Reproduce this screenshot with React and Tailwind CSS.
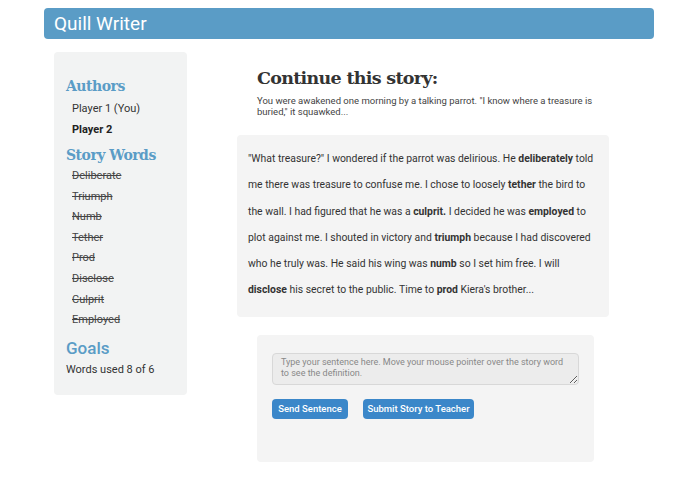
import React from 'react';

const slab = { fontFamily: '"DejaVu Serif", "Liberation Serif", serif' };

const storyWords = ['Deliberate', 'Triumph', 'Numb', 'Tether', 'Prod', 'Disclose', 'Culprit', 'Employed'];

const Sidebar = () => (
    <div className="mt-[13px] ml-[10px] w-[133px] h-[343px] bg-[#f2f3f3] rounded-sm pl-[12px] pt-[24px]">
        {/* Authors */}
        <h2 className="text-[14px] font-bold text-[#5a9cc6] leading-[20px] tracking-[-0.5px]" style={slab}>Authors</h2>
        <div className="pl-[6px] mt-[2px] text-[11px] text-[#333]">
            <div className="h-[21px] leading-[21px]">Player 1 (You)</div>
            <div className="h-[21px] leading-[21px] font-bold text-[#222]">Player 2</div>
        </div>

        {/* Story words, crossed out once used */}
        <h2 className="mt-[5px] text-[14px] font-bold text-[#5a9cc6] leading-[20px] tracking-[-0.5px]" style={slab}>Story Words</h2>
        <ul className="pl-[6px] mt-[1px] text-[11px] text-[#444]">
            {storyWords.map(w => (
                <li key={w} className="h-[20.6px] leading-[20.6px] line-through">{w}</li>
            ))}
        </ul>

        {/* Goals */}
        <h2 className="mt-[6px] text-[17px] font-medium text-[#5a9cc6] leading-[22px]">Goals</h2>
        <div className="mt-[1px] text-[11px] text-[#333] leading-[20px]">Words used 8 of 6</div>
    </div>
);

const Story = () => (
    <div className="w-[372px]">
        <div className="pl-[20px] pt-[26px]">
            <h1 className="text-[17.5px] font-bold text-[#333] leading-[26px] tracking-[-0.7px]" style={slab}>Continue this story:</h1>
            <p className="mt-[4px] text-[9.5px] leading-[11px] text-[#444] w-[345px]">
                You were awakened one morning by a talking parrot. "I know where a treasure is buried," it squawked...
            </p>
        </div>

        <div className="mt-[18px] bg-[#f4f4f4] rounded-sm px-[11px] pt-[11px] pb-[13px] text-[10.4px] leading-[26.3px] text-[#333]">
            "What treasure?" I wondered if the parrot was delirious. He <b>deliberately</b> told me there was treasure to confuse me. I chose to loosely <b>tether</b> the bird to the wall. I had figured that he was a <b>culprit.</b> I decided he was <b>employed</b> to plot against me. I shouted in victory and <b>triumph</b> because I had discovered who he truly was. He said his wing was <b>numb</b> so I set him free. I will <b>disclose</b> his secret to the public. Time to <b>prod</b> Kiera's brother...
        </div>

        <div className="mt-[18px] ml-[20px] w-[337px] h-[127px] bg-[#f4f4f4] rounded-sm pl-[15px] pt-[18px]">
            <textarea
                className="block w-[307px] h-[32px] bg-[#ececec] border border-[#d8d8d8] rounded-sm px-[8px] py-[3px] text-[9px] leading-[11px] text-[#333] placeholder:text-[#888] outline-none"
                placeholder="Type your sentence here. Move your mouse pointer over the story word to see the definition."
            />
            <div className="mt-[14px] flex gap-[15px]">
                <button className="h-[20px] w-[76px] bg-[#3b87c9] text-white text-[9.5px] font-medium rounded-sm">Send Sentence</button>
                <button className="h-[20px] w-[111px] bg-[#3b87c9] text-white text-[9.5px] font-medium rounded-sm">Submit Story to Teacher</button>
            </div>
        </div>
    </div>
);

export default function App() {
    return (
        <div className="w-[695px] h-[494px] bg-white overflow-hidden" style={{ fontFamily: 'Roboto, "Liberation Sans", sans-serif' }}>
            <div className="ml-[44px] pt-[8px] w-[610px]">
                {/* Title bar */}
                <div className="h-[31px] bg-[#5a9cc6] rounded-sm pl-[10px] flex items-center">
                    <span className="text-white text-[19px] leading-none">Quill Writer</span>
                </div>

                <div className="flex gap-[50px]">
                    <Sidebar />
                    <Story />
                </div>
            </div>
        </div>
    );
}
